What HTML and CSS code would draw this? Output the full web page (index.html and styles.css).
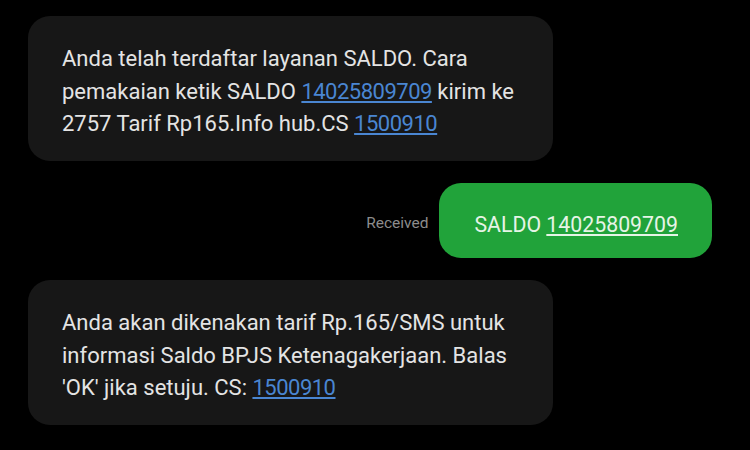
FILE: index.html
```html
<!DOCTYPE html>
<html lang="en">
<head>
    <meta charset="UTF-8">
    <meta name="viewport" content="width=device-width, initial-scale=1.0">
    <title>SMS SALDO</title>
    <link rel="stylesheet" href="styles.css">
</head>
<body>
    <div class="thread">
        <div class="msg incoming">
            Anda telah terdaftar layanan SALDO. Cara pemakaian ketik SALDO <a href="#">14025809709</a> kirim ke 2757 Tarif Rp165.Info hub.CS <a href="#">1500910</a>
        </div>

        <div class="row-out">
            <span class="status">Received</span>
            <div class="msg outgoing">SALDO <a href="#">14025809709</a></div>
        </div>

        <div class="msg incoming">
            Anda akan dikenakan tarif Rp.165/SMS untuk informasi Saldo BPJS Ketenagakerjaan. Balas 'OK' jika setuju. CS: <a href="#">1500910</a>
        </div>
    </div>
</body>
</html>
```

FILE: styles.css
```css
body { margin: 0; background: #000; font-family: Roboto, "Liberation Sans", sans-serif; color: #e4e4e4; }
.thread { display: flex; flex-direction: column; padding: 16px 38px 0 28px; gap: 22px; }
.msg { border-radius: 22px; line-height: 32.5px; }
.incoming { width: 525px; box-sizing: border-box; background: #171717; font-size: 22px; padding: 27px 26px 20px 34px; }
.incoming a { color: #4a86d2; text-decoration: underline; letter-spacing: -0.5px; }
.row-out { display: flex; justify-content: flex-end; align-items: center; gap: 11px; }
.status { color: #8c8c8c; font-size: 15.5px; margin-top: 5px; }
.outgoing { background: #21a33a; color: #e6f4e6; font-size: 21.3px; padding: 26px 34px 17px 35px; }
.outgoing a { color: #e6f4e6; text-decoration: underline; }
```
